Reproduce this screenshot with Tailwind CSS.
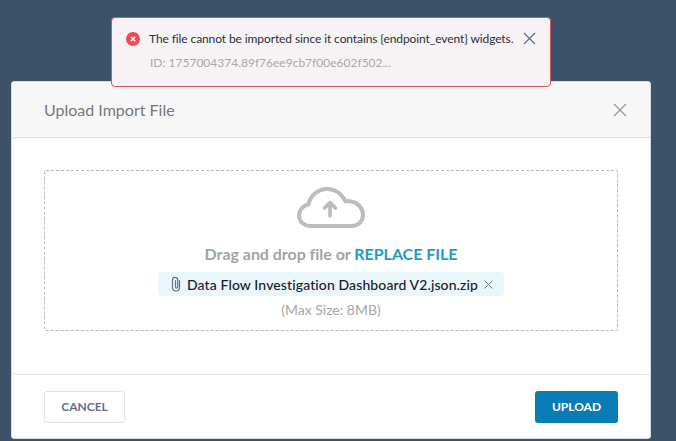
<!DOCTYPE html>
<html>
<head>
<meta charset="utf-8">
<script src="https://cdn.jsdelivr.net/npm/@tailwindcss/browser@4"></script>
</head>
<body class="m-0">
<div class="relative w-[676px] h-[441px] overflow-hidden bg-[#3c5269] font-['Lato','Noto_Sans',sans-serif]">
  <!-- modal -->
  <div class="absolute left-[11px] top-[81px] w-[640px] h-[358px] flex flex-col bg-white rounded-[3px] overflow-hidden border border-[#d8dadd]">
    <div class="h-[56px] shrink-0 flex items-center justify-between pl-[32px] pr-[23px] bg-[#f7f7f8] border-b border-[#dcdcdc]">
      <span class="text-[16px] text-[#77797c]">Upload Import File</span>
      <svg class="w-[14px] h-[14px]" viewBox="0 0 14 14" fill="none" stroke="#97999b" stroke-width="1.3"><path d="M1 1l12 12M13 1L1 13"/></svg>
    </div>
    <div class="flex-1 px-[32px] pt-[32px]">
      <div class="h-[161px] flex flex-col items-center border border-dashed border-[#b5b5b5] rounded-[2px]">
        <svg class="mt-[16px] w-[68px] h-[41px]" viewBox="0 0 68 41" fill="none" stroke="#bdbdbd" stroke-width="4" stroke-linecap="round" stroke-linejoin="round">
          <path d="M14 39C7 39 2 34.5 2 28.5C2 23 6 18.5 11.5 17.5C13 9 21 2 30 2C38 2 45 7 48.5 14.5C50 14 52 14 54 14.5C61 15.5 66 21.5 66 28C66 34.5 61 39 54 39Z"/>
          <path d="M33 29V15.5M27.5 21L33 15.5L38.5 21" stroke-width="3.6"/>
        </svg>
        <div class="mt-[15px] h-[22px] leading-[22px] text-[16px] font-bold text-[#a3a3a3] tracking-[-0.03px]">Drag and drop file or <span class="text-[#1f9bc4]">REPLACE FILE</span></div>
        <div class="mt-[7px] h-[24px] w-[346px] flex items-center pl-[12px] rounded-[4px] bg-[#e9f6fb]">
          <svg class="w-[12px] h-[16px] shrink-0" viewBox="0 0 12 16" fill="none" stroke="#6a727b" stroke-width="1.2" stroke-linecap="round"><path d="M9.5 4.5V11.5a3.5 3.5 0 0 1-7 0V4a2.6 2.6 0 0 1 5.2 0V11a1.1 1.1 0 0 1-2.2 0V4.5"/></svg>
          <span class="ml-[5px] text-[14px] font-medium tracking-[0.11px] text-[#1c2026] whitespace-nowrap">Data Flow Investigation Dashboard V2.json.zip</span>
          <svg class="ml-[6px] w-[9px] h-[9px] shrink-0" viewBox="0 0 9 9" fill="none" stroke="#70757b" stroke-width="1"><path d="M.5.5l8 8M8.5.5l-8 8"/></svg>
        </div>
        <div class="mt-[5px] text-[14px] leading-[18px] text-[#a6a6a6]">(Max Size: 8MB)</div>
      </div>
    </div>
    <div class="h-[64px] shrink-0 flex items-center justify-between px-[32px] pt-[1px] border-t border-[#e5e5e5]">
      <button class="w-[81px] h-[32px] flex items-center justify-center rounded-[3px] border border-[#dfe0e2] bg-white text-[12px] font-bold text-[#5f7183]">CANCEL</button>
      <button class="w-[83px] h-[32px] flex items-center justify-center rounded-[3px] bg-[#0a7cb5] text-[12px] font-bold text-white">UPLOAD</button>
    </div>
  </div>
  <!-- toast -->
  <div class="absolute left-[111px] top-[17px] w-[440px] h-[70px] rounded-[4px] border border-[#d9545b] bg-[#f7f2f4] pl-[14px] pt-[12px]">
    <div class="flex items-center h-[17px]">
      <svg class="w-[14px] h-[14px] shrink-0" viewBox="0 0 14 14"><circle cx="7" cy="7" r="7" fill="#ee4c52"/><path d="M4.8 4.8l4.4 4.4M9.2 4.8l-4.4 4.4" stroke="#fff" stroke-width="1.4" fill="none"/></svg>
      <span class="ml-[9px] text-[12px] tracking-[-0.1px] text-[#2b2f36] whitespace-nowrap">The file cannot be imported since it contains {endpoint_event} widgets.</span>
      <svg class="ml-[10px] w-[13px] h-[13px] shrink-0" viewBox="0 0 13 13" fill="none" stroke="#5f7390" stroke-width="1.3"><path d="M1 1l11 11M12 1L1 12"/></svg>
    </div>
    <div class="ml-[24px] mt-[8px] text-[12px] leading-[16px] text-[#a9a9ab] whitespace-nowrap">ID: 1757004374.89f76ee9cb7f00e602f502...</div>
  </div>
</div>
</body>
</html>
